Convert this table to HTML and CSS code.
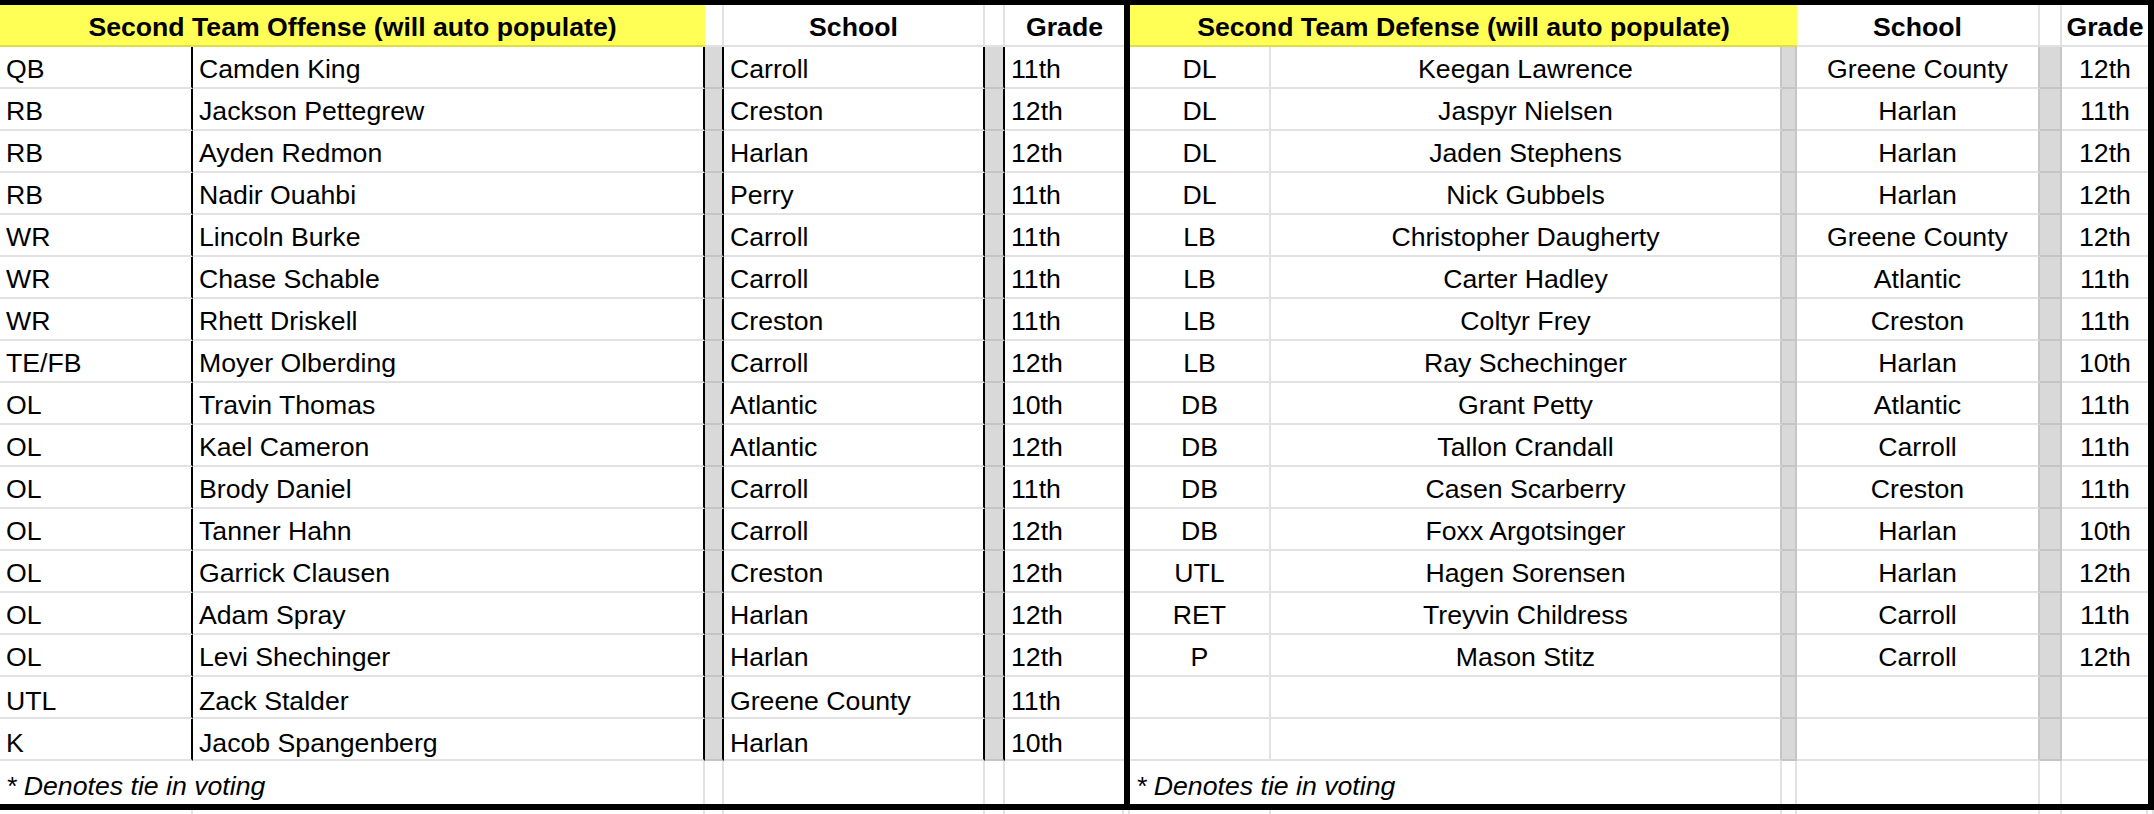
FILE: index.html
```html
<!DOCTYPE html>
<html>
<head>
<meta charset="utf-8">
<link rel="stylesheet" href="styles.css">
</head>
<body>
<div class="page">
  <div class="tables">
    <div class="grid left">
      <div class="c hdr">Second Team Offense (will auto populate)</div>
      <div class="c hgap"></div>
      <div class="c hcol">School</div>
      <div class="c hgap"></div>
      <div class="c hcol last">Grade</div>

      <div class="c pos">QB</div><div class="c name">Camden King</div><div class="c gap"></div><div class="c school">Carroll</div><div class="c gap"></div><div class="c grade">11th</div>
      <div class="c pos">RB</div><div class="c name">Jackson Pettegrew</div><div class="c gap"></div><div class="c school">Creston</div><div class="c gap"></div><div class="c grade">12th</div>
      <div class="c pos">RB</div><div class="c name">Ayden Redmon</div><div class="c gap"></div><div class="c school">Harlan</div><div class="c gap"></div><div class="c grade">12th</div>
      <div class="c pos">RB</div><div class="c name">Nadir Ouahbi</div><div class="c gap"></div><div class="c school">Perry</div><div class="c gap"></div><div class="c grade">11th</div>
      <div class="c pos">WR</div><div class="c name">Lincoln Burke</div><div class="c gap"></div><div class="c school">Carroll</div><div class="c gap"></div><div class="c grade">11th</div>
      <div class="c pos">WR</div><div class="c name">Chase Schable</div><div class="c gap"></div><div class="c school">Carroll</div><div class="c gap"></div><div class="c grade">11th</div>
      <div class="c pos">WR</div><div class="c name">Rhett Driskell</div><div class="c gap"></div><div class="c school">Creston</div><div class="c gap"></div><div class="c grade">11th</div>
      <div class="c pos">TE/FB</div><div class="c name">Moyer Olberding</div><div class="c gap"></div><div class="c school">Carroll</div><div class="c gap"></div><div class="c grade">12th</div>
      <div class="c pos">OL</div><div class="c name">Travin Thomas</div><div class="c gap"></div><div class="c school">Atlantic</div><div class="c gap"></div><div class="c grade">10th</div>
      <div class="c pos">OL</div><div class="c name">Kael Cameron</div><div class="c gap"></div><div class="c school">Atlantic</div><div class="c gap"></div><div class="c grade">12th</div>
      <div class="c pos">OL</div><div class="c name">Brody Daniel</div><div class="c gap"></div><div class="c school">Carroll</div><div class="c gap"></div><div class="c grade">11th</div>
      <div class="c pos">OL</div><div class="c name">Tanner Hahn</div><div class="c gap"></div><div class="c school">Carroll</div><div class="c gap"></div><div class="c grade">12th</div>
      <div class="c pos">OL</div><div class="c name">Garrick Clausen</div><div class="c gap"></div><div class="c school">Creston</div><div class="c gap"></div><div class="c grade">12th</div>
      <div class="c pos">OL</div><div class="c name">Adam Spray</div><div class="c gap"></div><div class="c school">Harlan</div><div class="c gap"></div><div class="c grade">12th</div>
      <div class="c pos">OL</div><div class="c name">Levi Shechinger</div><div class="c gap"></div><div class="c school">Harlan</div><div class="c gap"></div><div class="c grade">12th</div>
      <div class="c pos low">UTL</div><div class="c name low">Zack Stalder</div><div class="c gap"></div><div class="c school low">Greene County</div><div class="c gap"></div><div class="c grade low">11th</div>
      <div class="c pos low">K</div><div class="c name low">Jacob Spangenberg</div><div class="c gap"></div><div class="c school low">Harlan</div><div class="c gap"></div><div class="c grade low">10th</div>

      <div class="c foot">* Denotes tie in voting</div><div class="c fc"></div><div class="c fc"></div><div class="c fc"></div><div class="c fc last"></div>
    </div>
    <div class="divider"></div>
    <div class="grid right">
      <div class="c hdr">Second Team Defense (will auto populate)</div>
      <div class="c hcol">School</div>
      <div class="c hgap"></div>
      <div class="c hcol last">Grade</div>

      <div class="c pos">DL</div><div class="c name">Keegan Lawrence</div><div class="c gap"></div><div class="c school">Greene County</div><div class="c gap"></div><div class="c grade">12th</div>
      <div class="c pos">DL</div><div class="c name">Jaspyr Nielsen</div><div class="c gap"></div><div class="c school">Harlan</div><div class="c gap"></div><div class="c grade">11th</div>
      <div class="c pos">DL</div><div class="c name">Jaden Stephens</div><div class="c gap"></div><div class="c school">Harlan</div><div class="c gap"></div><div class="c grade">12th</div>
      <div class="c pos">DL</div><div class="c name">Nick Gubbels</div><div class="c gap"></div><div class="c school">Harlan</div><div class="c gap"></div><div class="c grade">12th</div>
      <div class="c pos">LB</div><div class="c name">Christopher Daugherty</div><div class="c gap"></div><div class="c school">Greene County</div><div class="c gap"></div><div class="c grade">12th</div>
      <div class="c pos">LB</div><div class="c name">Carter Hadley</div><div class="c gap"></div><div class="c school">Atlantic</div><div class="c gap"></div><div class="c grade">11th</div>
      <div class="c pos">LB</div><div class="c name">Coltyr Frey</div><div class="c gap"></div><div class="c school">Creston</div><div class="c gap"></div><div class="c grade">11th</div>
      <div class="c pos">LB</div><div class="c name">Ray Schechinger</div><div class="c gap"></div><div class="c school">Harlan</div><div class="c gap"></div><div class="c grade">10th</div>
      <div class="c pos">DB</div><div class="c name">Grant Petty</div><div class="c gap"></div><div class="c school">Atlantic</div><div class="c gap"></div><div class="c grade">11th</div>
      <div class="c pos">DB</div><div class="c name">Tallon Crandall</div><div class="c gap"></div><div class="c school">Carroll</div><div class="c gap"></div><div class="c grade">11th</div>
      <div class="c pos">DB</div><div class="c name">Casen Scarberry</div><div class="c gap"></div><div class="c school">Creston</div><div class="c gap"></div><div class="c grade">11th</div>
      <div class="c pos">DB</div><div class="c name">Foxx Argotsinger</div><div class="c gap"></div><div class="c school">Harlan</div><div class="c gap"></div><div class="c grade">10th</div>
      <div class="c pos">UTL</div><div class="c name">Hagen Sorensen</div><div class="c gap"></div><div class="c school">Harlan</div><div class="c gap"></div><div class="c grade">12th</div>
      <div class="c pos">RET</div><div class="c name">Treyvin Childress</div><div class="c gap"></div><div class="c school">Carroll</div><div class="c gap"></div><div class="c grade">11th</div>
      <div class="c pos">P</div><div class="c name">Mason Stitz</div><div class="c gap"></div><div class="c school">Carroll</div><div class="c gap"></div><div class="c grade">12th</div>
      <div class="c pos"></div><div class="c name"></div><div class="c gap"></div><div class="c school"></div><div class="c gap"></div><div class="c grade"></div>
      <div class="c pos"></div><div class="c name"></div><div class="c gap"></div><div class="c school"></div><div class="c gap"></div><div class="c grade"></div>

      <div class="c foot">* Denotes tie in voting</div><div class="c fc"></div><div class="c fc"></div><div class="c fc"></div><div class="c fc last"></div>
    </div>
    <div class="divider"></div>
  </div>
  <div class="tail">
    <div></div><div></div><div></div><div></div><div></div><div></div><div></div>
    <div></div><div></div><div></div><div></div><div></div><div></div><div></div>
  </div>
</div>
</body>
</html>
```
FILE: styles.css
```css
html, body {
  margin: 0;
  padding: 0;
  background: #ffffff;
}
body {
  width: 2154px;
  height: 814px;
  overflow: hidden;
  font-family: "Liberation Sans", Arial, sans-serif;
  font-size: 26.67px;
  color: #000;
}
.page {
  display: flex;
  flex-direction: column;
  width: 2154px;
}
.tables {
  display: flex;
  border-top: 5px solid #000;
  border-bottom: 6px solid #000;
}
.divider {
  width: 6px;
  background: #000;
  flex: none;
}
.grid {
  display: grid;
  grid-template-rows: 42px repeat(17, 42px) 43px;
  flex: none;
}
.left {
  grid-template-columns: 193px 512px 19px 261px 20px 119px;
}
.right {
  grid-template-columns: 141px 511px 15px 243px 22px 86px;
}
.c {
  box-sizing: border-box;
  display: flex;
  align-items: flex-end;
  padding: 0 6px 3px 6px;
  line-height: 30px;
  white-space: nowrap;
  overflow: hidden;
  border-right: 2px solid #e2e2e2;
  border-bottom: 2px solid #e2e2e2;
}
.c.low { padding-bottom: 1px; }
.hdr {
  background: #ffff55;
  font-weight: bold;
  justify-content: center;
  border-right: 0;
  border-bottom-color: #dedb4f;
}
.left .hdr { grid-column: span 2; }
.right .hdr { grid-column: span 3; }
.hcol {
  font-weight: bold;
  justify-content: center;
}
.last { border-right: 0; }
.gap {
  background: #d9d9d9;
  padding: 0;
  border-bottom-color: #c4c4c4;
}
.left .pos,
.left .name,
.left .school,
.left .gap {
  border-right-color: #000;
}
.left .grade { border-right: 0; }
.right .c.pos,
.right .c.name,
.right .c.school,
.right .c.grade {
  justify-content: center;
}
.right .name,
.right .gap,
.right .school {
  border-right-color: #c6c6c6;
}
.right .grade { border-right: 0; }
.foot {
  grid-column: span 2;
  font-style: italic;
  border-bottom: 0;
}
.fc { border-bottom: 0; }
.tail {
  display: grid;
  grid-template-columns: 193px 512px 19px 261px 20px 119px 6px 141px 511px 15px 243px 22px 86px 6px;
  height: 4px;
}
.tail div {
  box-sizing: border-box;
  border-right: 2px solid #e2e2e2;
}
```
